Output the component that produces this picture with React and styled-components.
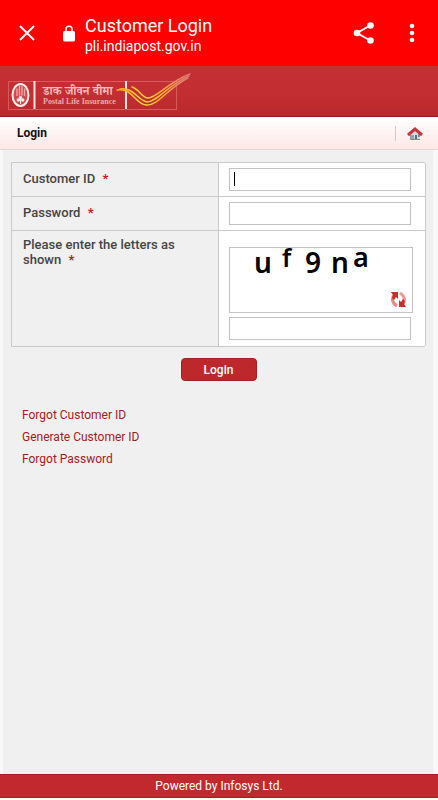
import React, { useState } from "react";
import styled, { createGlobalStyle } from "styled-components";

const links = ["Forgot Customer ID", "Generate Customer ID", "Forgot Password"];

const App = () => {
  const [form, setForm] = useState({ customerId: "", password: "", captcha: "" });

  const handleChange = (e) => {
    setForm({ ...form, [e.target.name]: e.target.value });
  };

  return (
    <Page>
      <GlobalStyle />
      <BrowserBar>
        <IconButton aria-label="Close">
          <CloseIcon />
        </IconButton>
        <LockIcon />
        <div className="site">
          <span className="title">Customer Login</span>
          <span className="url">pli.indiapost.gov.in</span>
        </div>
        <IconButton aria-label="Share">
          <ShareIcon />
        </IconButton>
        <IconButton aria-label="More options">
          <MoreIcon />
        </IconButton>
      </BrowserBar>
      <Brand>
        <Logo />
      </Brand>
      <TitleBar>
        <h1>Login</h1>
        <a href="#home" aria-label="Home">
          <HomeIcon />
        </a>
      </TitleBar>
      <Content>
        <form onSubmit={(e) => e.preventDefault()}>
          <Fields>
            <Row>
              <Label htmlFor="customerId">
                Customer ID <Required>*</Required>
              </Label>
              <Cell>
                <Input
                  id="customerId"
                  name="customerId"
                  type="text"
                  value={form.customerId}
                  onChange={handleChange}
                />
                {!form.customerId && <Caret />}
              </Cell>
            </Row>
            <Row>
              <Label htmlFor="password">
                Password <Required>*</Required>
              </Label>
              <Cell>
                <Input
                  id="password"
                  name="password"
                  type="password"
                  value={form.password}
                  onChange={handleChange}
                />
              </Cell>
            </Row>
            <Row>
              <Label htmlFor="captcha" $tall>
                Please enter the letters as shown <Required>*</Required>
              </Label>
              <Cell $tall>
                <Captcha>
                  <CaptchaLetters />
                  <button type="button" aria-label="Refresh letters">
                    <RefreshIcon />
                  </button>
                </Captcha>
                <Input
                  id="captcha"
                  name="captcha"
                  type="text"
                  value={form.captcha}
                  onChange={handleChange}
                />
              </Cell>
            </Row>
          </Fields>
          <LoginButton type="submit">Login</LoginButton>
        </form>
        <Links>
          {links.map((link) => (
            <li key={link}>
              <a href="#help">{link}</a>
            </li>
          ))}
        </Links>
      </Content>
      <Footer>Powered by Infosys Ltd.</Footer>
    </Page>
  );
};

const CloseIcon = () => (
  <svg width="16" height="16" viewBox="0 0 16 16" stroke="#fff" strokeWidth="2">
    <path d="M1 1L15 15M15 1L1 15" />
  </svg>
);

const LockIcon = () => (
  <svg width="12" height="17" viewBox="0 0 12 17">
    <path d="M3 7V4.200a3 3 0 0 1 6 0V7" fill="none" stroke="#fff" strokeWidth="1.500" />
    <rect y="6" width="12" height="10.500" rx="1.500" fill="#fff" />
  </svg>
);

const ShareIcon = () => (
  <svg width="22" height="24" viewBox="0 0 22 24" fill="#fff">
    <path d="M18 4L4 12L18 20" fill="none" stroke="#fff" strokeWidth="2" />
    <circle cx="17.500" cy="4.500" r="3.300" />
    <circle cx="4" cy="12" r="3.300" />
    <circle cx="17.500" cy="19.500" r="3.300" />
  </svg>
);

const MoreIcon = () => (
  <svg width="6" height="20" viewBox="0 0 6 20" fill="#fff">
    <circle cx="3" cy="3" r="2.300" />
    <circle cx="3" cy="10" r="2.300" />
    <circle cx="3" cy="17" r="2.300" />
  </svg>
);

const Logo = () => (
  <svg width="184" height="40" viewBox="0 0 184 40" role="img">
    <defs>
      <linearGradient id="wing" gradientUnits="userSpaceOnUse" x1="109" x2="182" y1="0" y2="0">
        <stop offset="0" stopColor="#ffa51f" />
        <stop offset="0.300" stopColor="#ffd23c" />
        <stop offset="0.600" stopColor="#ffb72c" />
        <stop offset="0.800" stopColor="#ea8a5c" />
        <stop offset="1" stopColor="#dd7475" />
      </linearGradient>
    </defs>
    <rect x="0.500" y="9.500" width="168" height="28" fill="none" stroke="#d65a5e" />
    <ellipse cx="12.500" cy="23" rx="9" ry="12" fill="#fff0ee" />
    <ellipse cx="12.500" cy="23" rx="7" ry="10" fill="#d4484c" />
    <path
      d="M9 25V17M11.500 23V14M14 23V14.500M16.500 25V17"
      stroke="#eda5a3"
      strokeWidth="1.400"
      strokeLinecap="round"
      fill="none"
    />
    <path d="M8 24h9v3l-3 3h-3l-3-3z" fill="#d4484c" />
    <circle cx="12.500" cy="25.500" r="1.700" fill="#fff0ee" />
    <circle cx="10.300" cy="28" r="1.700" fill="#fff0ee" />
    <circle cx="14.700" cy="28" r="1.700" fill="#fff0ee" />
    <path d="M12.500 27v5" stroke="#fff0ee" />
    <path d="M26.500 9V37M118 9V37" stroke="#ffe3e0" strokeWidth="2" />
    <text
      x="35"
      y="23"
      fill="#f3bcba"
      fontSize="12"
      fontWeight="700"
      fontFamily="'Noto Serif Devanagari', 'Noto Sans Devanagari', 'Noto Sans', serif"
    >
      डाक जीवन वीमा
    </text>
    <text
      x="35"
      y="32"
      fill="#eba9a8"
      fontSize="8"
      fontWeight="700"
      fontFamily="'Liberation Serif', serif"
    >
      Postal Life Insurance
    </text>
    <g fill="none" stroke="url(#wing)" strokeWidth="1.500" strokeLinecap="round">
      <path d="M109 18C124 15 127 32 138 33C150 34 160 16 180 6" />
      <path d="M112 17C126 15 129 28 139 30C149 30 160 13 181 4" />
      <path d="M124 15C131 17 134 26 140 26C149 26 160 10 182 2" />
    </g>
  </svg>
);

const HomeIcon = () => (
  <svg width="16" height="15" viewBox="0 0 16 15">
    <path d="M3 7L8 3L13 7V14H3z" fill="#d9dce3" />
    <path d="M3 9h4v5H3z" fill="#93a1b0" />
    <path d="M8 9h2v4H8z" fill="#5c6b80" />
    <path d="M11 8h2v3h-2zM4 13h9v1H4z" fill="#81927b" />
    <path d="M1 9L8 3L15 9" fill="none" stroke="#c2383e" strokeWidth="3" />
  </svg>
);

const RefreshIcon = () => (
  <svg width="17" height="17" viewBox="0 0 17 17">
    <path d="M5 3c-4 4-3 9 2 12" fill="none" stroke="#e58a88" strokeWidth="3" />
    <path d="M12 14c4-4 3-9-2-12" fill="none" stroke="#e99a98" strokeWidth="3" />
    <path d="M1 1h7v7L6 6 4 9 2 7l1-3z" fill="#cf2a2d" />
    <path d="M16 16H9V9l2 2 2-3 2 2-1 3z" fill="#cf2a2d" />
  </svg>
);

const CaptchaLetters = () => (
  <svg
    width="160"
    height="40"
    viewBox="0 0 160 40"
    fontFamily="'Noto Sans', sans-serif"
    fontSize="28"
    fontWeight="600"
  >
    <text x="24" y="25">u</text>
    <text x="52" y="19" fontSize="25">f</text>
    <text x="75" y="25">9</text>
    <text x="101" y="25">n</text>
    <text x="123" y="19" fontSize="27">a</text>
  </svg>
);

const GlobalStyle = createGlobalStyle`
  * {
    box-sizing: border-box;
  }

  body {
    margin: 0;
    background: #fff;
    font-family: Roboto, sans-serif;
  }
`;

const Page = styled.div`
  display: flex;
  flex-direction: column;
  min-height: 100vh;
  padding-bottom: 2px;
`;

const BrowserBar = styled.header`
  display: flex;
  align-items: center;
  height: 66px;
  padding: 0 12px;
  background: #fe0000;
  color: #fff;

  .site {
    display: flex;
    flex: 1;
    flex-direction: column;
    margin-left: 10px;
    padding-top: 4px;
  }

  .title {
    font-size: 18px;
    line-height: 22px;
  }

  .url {
    font-size: 14px;
    line-height: 18px;
  }
`;

const IconButton = styled.button`
  display: flex;
  align-items: center;
  justify-content: center;
  width: 30px;
  height: 40px;
  padding: 0;
  border: none;
  background: none;
  cursor: pointer;

  & + svg {
    margin-left: 21px;
  }

  & + & {
    margin-left: 18px;
    margin-right: -1px;
  }
`;

const Brand = styled.div`
  height: 51px;
  padding: 6px 8px 0;
  border-bottom: 1px solid #8d1e22;
  background: linear-gradient(#c42f33, #c22e32 60%, #b9292d);

  svg {
    display: block;
  }
`;

const TitleBar = styled.div`
  display: flex;
  align-items: center;
  justify-content: space-between;
  height: 33px;
  padding: 0 15px 0 17px;
  border-bottom: 1px solid #e3d6d6;
  background: linear-gradient(#fff, #ffe7e7);

  h1 {
    margin: 0;
    color: #111;
    font-size: 12px;
    font-weight: 700;
  }

  a {
    display: flex;
    padding-left: 11px;
    border-left: 1px solid #d4c8c8;
  }
`;

const Content = styled.main`
  flex: 1;
  padding: 12px 7px 0 8px;
  border: solid #f8f8f8;
  border-width: 0 5px 0 3px;
  background: #f0f0f0;
`;

const Fields = styled.div`
  overflow: hidden;
  border: 1px solid #c9c9c9;
  border-radius: 0 3px 3px 0;
`;

const Row = styled.div`
  display: grid;
  grid-template-columns: calc(50% - 1px) 1fr;

  & + & {
    border-top: 1px solid #c9c9c9;
  }
`;

const Label = styled.label`
  padding: ${({ $tall }) => ($tall ? "6px" : "8px")} 20px 0 11px;
  color: #444;
  font-size: 13px;
  font-weight: 500;
  line-height: 15px;
`;

const Required = styled.span`
  margin-left: 4px;
  color: #c8191f;
  font-weight: 700;
`;

const Cell = styled.div`
  position: relative;
  padding: ${({ $tall }) => ($tall ? "16px 12px 6px 10px" : "5px 12px 5px 10px")};
  border-left: 1px solid #c9c9c9;
  background: #fff;
`;

const Input = styled.input`
  display: block;
  width: calc(100% - 2px);
  height: 23px;
  padding: 0 5px;
  border: 1px solid #c2c2c2;
  border-radius: 0;
  outline: none;
  background: #fff;
  font-family: inherit;
  font-size: 12px;
`;

const Caret = styled.span`
  position: absolute;
  top: 9px;
  left: 15px;
  width: 1px;
  height: 14px;
  background: #000;
  pointer-events: none;
`;

const Captcha = styled.div`
  position: relative;
  height: 66px;
  margin-bottom: 4px;
  border: 1px solid #c2c2c2;

  svg {
    display: block;
    overflow: visible;
  }

  button {
    position: absolute;
    right: 5px;
    bottom: 4px;
    padding: 0;
    border: none;
    background: none;
    cursor: pointer;
  }
`;

const LoginButton = styled.button`
  display: block;
  width: 76px;
  height: 23px;
  margin: 11px auto 0;
  padding: 0;
  border: 1px solid #a52024;
  border-radius: 4px;
  background: #bc282c;
  color: #fff;
  font-family: inherit;
  font-size: 12px;
  font-weight: 500;
  cursor: pointer;
`;

const Links = styled.ul`
  margin: 23px 0 0;
  padding: 0 11px;
  list-style: none;
  font-size: 12px;
  line-height: 22px;

  a {
    color: #a01c22;
    text-decoration: none;
  }
`;

const Footer = styled.footer`
  height: 24px;
  border-top: 1px solid #9c2226;
  border-bottom: 1px solid #9c2226;
  background: #c1292e;
  color: #fff;
  font-size: 12px;
  line-height: 22px;
  text-align: center;
`;

export default App;
